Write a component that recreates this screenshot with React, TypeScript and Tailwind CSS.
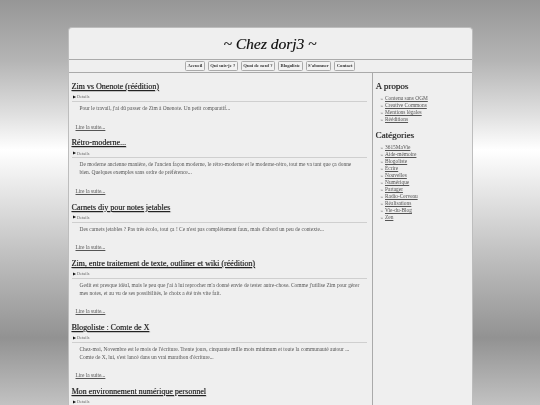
const posts = [
  { t: "Zim vs Onenote (réédition)", b: ["Pour le travail, j'ai dû passer de Zim à Onenote. Un petit comparatif..."] },
  { t: "Rétro-moderne...", b: ["De moderne ancienne manière, de l'ancien façon moderne, le rétro-moderne et le moderne-rétro, tout me va tant que ça donne", "bien. Quelques exemples sans ordre de préférence..."] },
  { t: "Carnets diy pour notes jetables", b: ["Des carnets jetables ? Pas très écolo, tout ça ! Ce n'est pas complètement faux, mais d'abord un peu de contexte..."] },
  { t: "Zim, entre traitement de texte, outliner et wiki (réédition)", b: ["Gedit est presque idéal, mais le peu que j'ai à lui reprocher m'a donné envie de tester autre-chose. Comme j'utilise Zim pour gérer", "mes notes, et au vu de ses possibilités, le choix a été très vite fait."] },
  { t: "Blogoliste : Comte de X", b: ["Chez-moi, Novembre est le mois de l'écriture. Trente jours, cinquante mille mots minimum et toute la communauté autour ...", "Comte de X, lui, s'est lancé dans un vrai marathon d'écriture..."] },
  { t: "Mon environnement numérique personnel", b: [] },
];
const nav = ["Accueil", "Qui suis-je ?", "Quoi de neuf ?", "Blogoliste", "S'abonner", "Contact"];
const about = ["Contenu sans OGM", "Creative Commons", "Mentions légales", "Rééditions"];
const cats = ["3615MaVie", "Aide-mémoire", "Blogoliste", "Écrire", "Nouvelles", "Numérique", "Partager", "Radio-Cerveau", "Réalisations", "Vie-du-Blog", "Zen"];

function Side({ title, items }: { title: string; items: string[] }) {
  return (
    <div>
      <h3 className="text-[9px] leading-[12px] text-[#222] [text-shadow:0.4px_0.4px_0.4px_#777]">{title}</h3>
      <ul className="mt-[3px] pl-[5px] text-[5.4px] leading-[7px] text-[#555]">
        {items.map((i) => (
          <li key={i} className="flex items-center gap-[2px]">
            <span className="text-[5px] leading-[7px]">»</span>
            <span className="underline">{i}</span>
          </li>
        ))}
      </ul>
    </div>
  );
}

export default function App() {
  return (
    <div className="h-[405px] w-[540px] overflow-hidden bg-[linear-gradient(to_bottom,#969696_0px,#b4b4b4_60px,#e0e0e0_115px,#ffffff_150px,#e4e4e4_195px,#c0c0c0_255px,#929292_338px,#c2c2c2_405px)] pt-[27px] font-['Liberation_Serif',serif]">
      <div className="mx-auto h-[400px] w-[405px] rounded-t-[4px] border border-b-0 border-[#bdbdbd] bg-[#efefef] blur-[0.25px]">
        <header className="flex h-[32px] items-center justify-center border-b border-[#aaaaaa]">
          <h1 className="text-[15.5px] italic leading-none text-[#111] [text-shadow:0.4px_0.4px_0.4px_#888]">~ Chez dorj3 ~</h1>
        </header>
        <nav className="flex h-[13px] items-center justify-center gap-[3px] border-b border-[#aaaaaa]">
          {nav.map((n) => (
            <span key={n} className="flex h-[10.5px] items-center rounded-[1.5px] border border-[#aaa] bg-[#f2f2f2] px-[1.5px] text-[4.7px] font-bold leading-none text-[#333]">
              {n}
            </span>
          ))}
        </nav>
        <div className="flex">
          <main className="h-[400px] w-[304px] border-r border-[#aaaaaa] pl-[3px] pr-[5px] pt-[7px]">
            {posts.map((p) => (
              <article key={p.t} className="mb-[5px]">
                <h2 className="text-[8px] leading-[13px] text-[#222] underline [text-shadow:0.4px_0.4px_0.4px_#777]">{p.t}</h2>
                <div className="mt-[1px] flex h-[8px] items-center gap-[1.5px] border-b border-[#cfcfcf] pl-[1px] text-[4.4px] text-[#666]">
                  <span className="text-[3.5px] text-[#111]">▶</span> Details
                </div>
                {p.b.length > 0 && (
                  <>
                    <div className="mt-[3px] pl-[8px] text-[5.42px] leading-[7.7px] text-[#555]">
                      {p.b.map((l) => (
                        <div key={l} className="whitespace-nowrap">{l}</div>
                      ))}
                    </div>
                    <div className="mt-[11px] pl-[4px] text-[5.42px] leading-[7.7px] text-[#555] underline">Lire la suite...</div>
                  </>
                )}
              </article>
            ))}
          </main>
          <aside className="flex-1 pl-[3px] pt-[7px]">
            <Side title="A propos" items={about} />
            <div className="h-[6px]" />
            <Side title="Catégories" items={cats} />
          </aside>
        </div>
      </div>
    </div>
  );
}
